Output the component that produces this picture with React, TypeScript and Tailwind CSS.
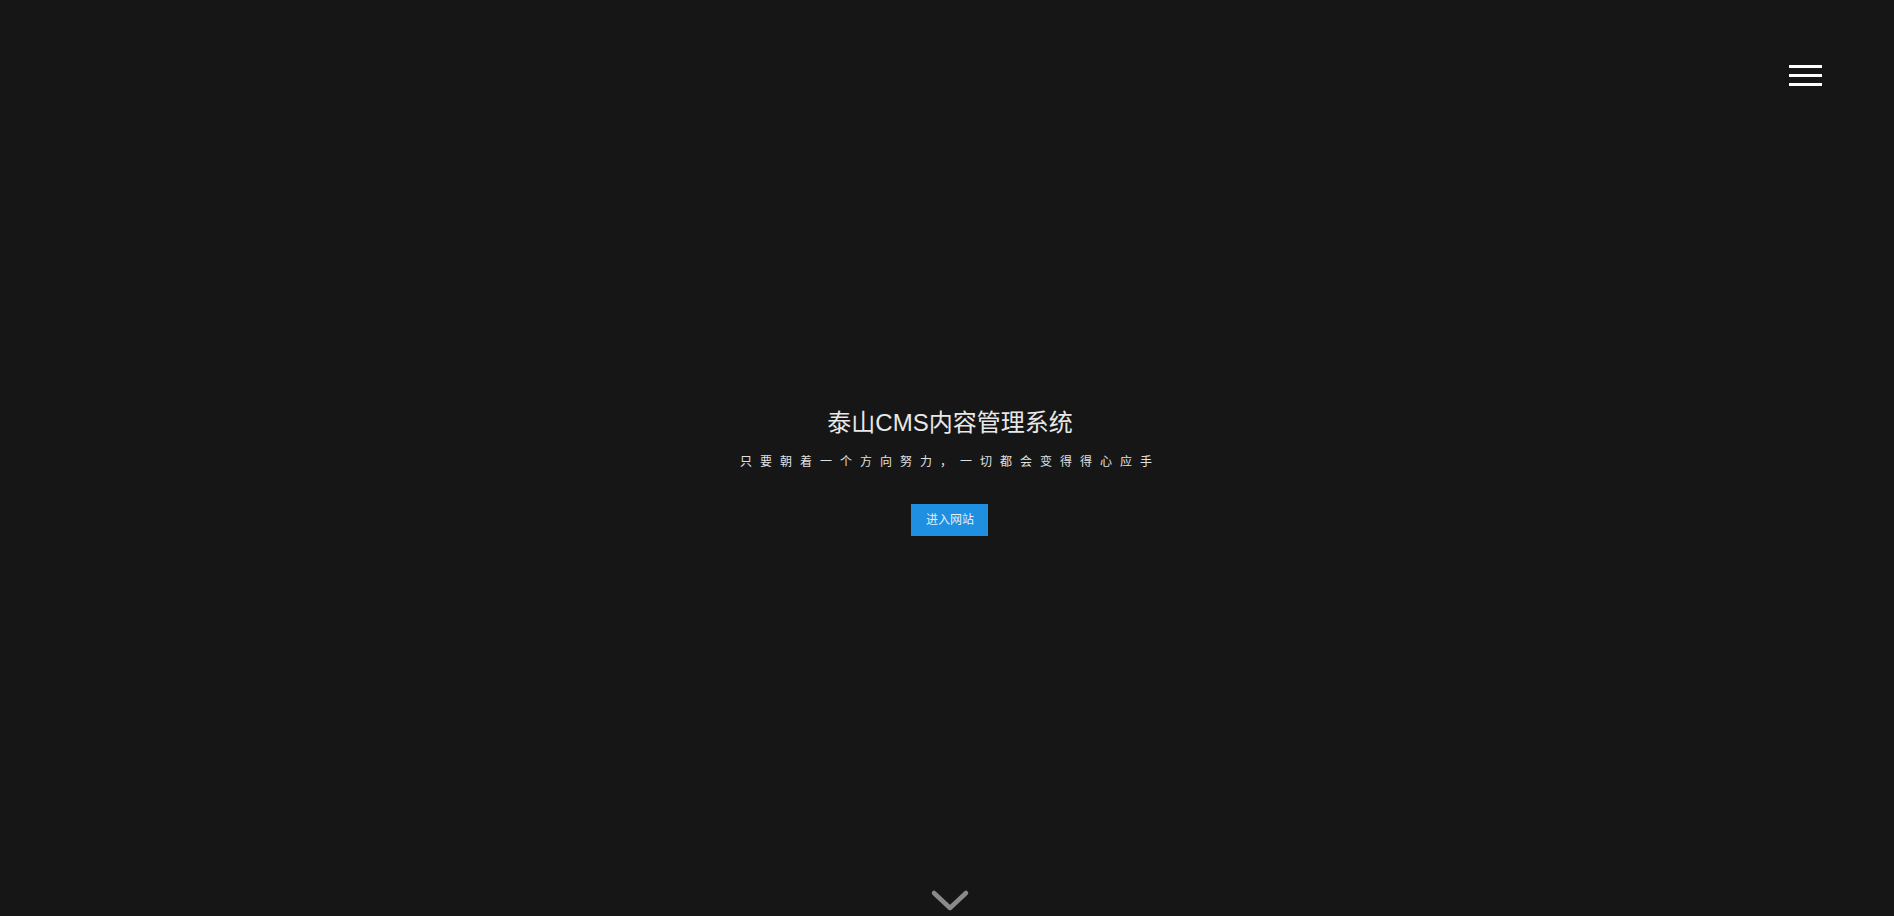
import React from "react";

export default function App() {
  return (
    <div
      className="relative flex h-[916px] w-full flex-col items-center overflow-hidden bg-[#161616] pl-[6px]"
      style={{ fontFamily: '"Liberation Sans", "Noto Sans CJK SC", sans-serif' }}
    >
      <button className="absolute right-[72px] top-[65px] flex w-[33px] flex-col gap-[6px]">
        <span className="block h-[3px] w-full bg-white" />
        <span className="block h-[3px] w-full bg-white" />
        <span className="block h-[3px] w-full bg-white" />
      </button>

      <div className="flex flex-col items-center pt-[407px]">
        <h1 className="text-[24px] font-normal leading-[32px] text-[#e8e8e8]">泰山CMS内容管理系统</h1>
        <p className="mt-[15px] text-[12px] leading-[16px] tracking-[8px] text-[#e0e0e0]">
          只要朝着一个方向努力，一切都会变得得心应手
        </p>
        <a className="mt-[34px] flex h-[32px] w-[77px] items-center justify-center bg-[#1e8fe1] text-[12px] text-[#e6eef6]">
          进入网站
        </a>
      </div>

      <div className="mt-auto mb-[2px] flex justify-center">
        <svg width="40" height="26" viewBox="0 0 40 26" fill="none">
          <path d="M4 5 L20 20 L36 5" stroke="#8a8a8a" strokeWidth="4.5" strokeLinecap="round" strokeLinejoin="round" />
        </svg>
      </div>
    </div>
  );
}
